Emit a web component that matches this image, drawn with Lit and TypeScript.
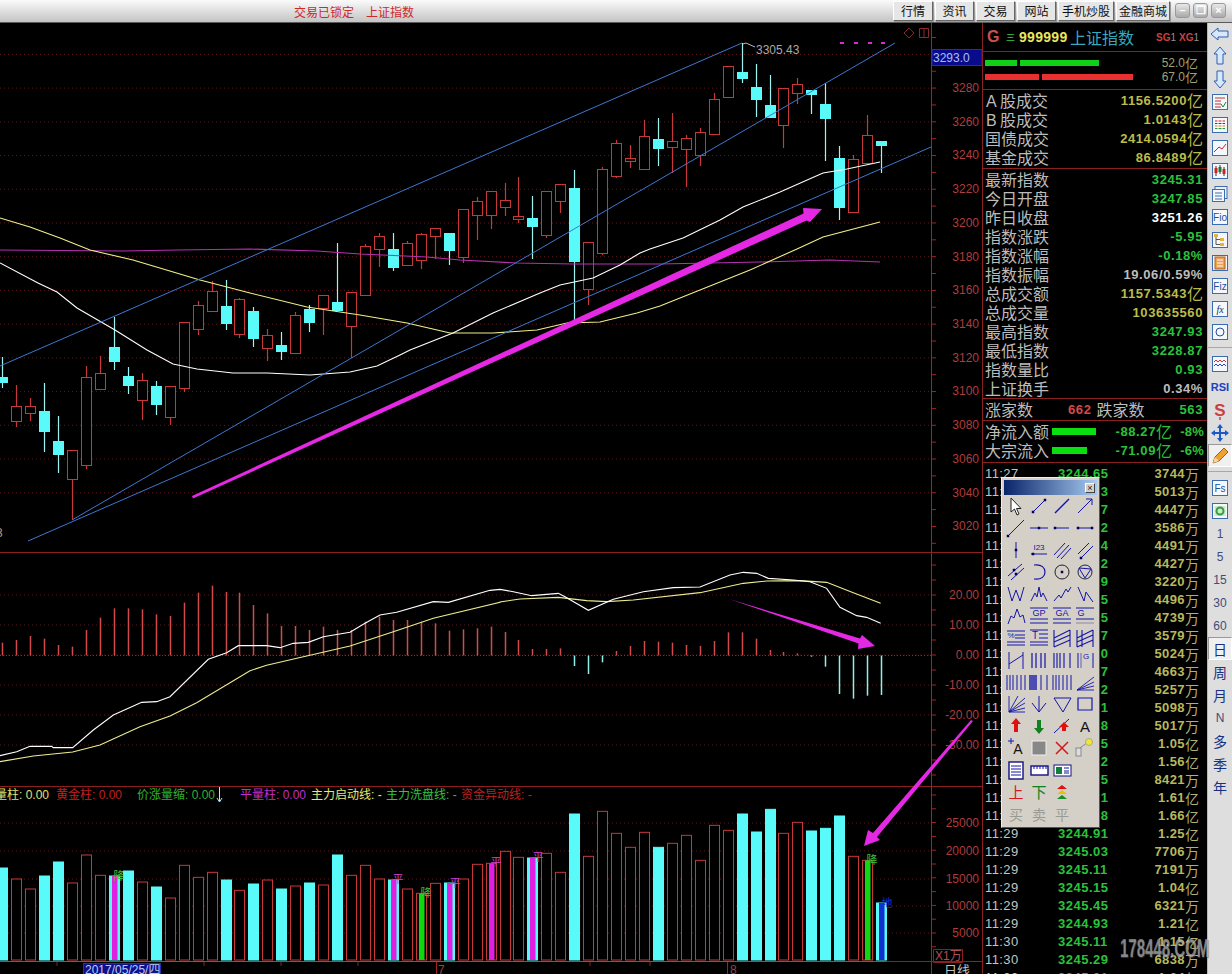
import { LitElement, html, css, svg } from "lit";
import { customElement } from "lit/decorators.js";

const X = (i: number) => Math.round(2.3 + 13.95 * i);
type C = [number, number, number, number, string];
const candles: C[] = [
  [357,377,382,388,"c"],[385,406,421,427,"r"],[398,406,413,421,"r"],[383,411,431,452,"c"],[416,441,454,473,"c"],
  [450,450,479,520,"r"],[366,377,465,469,"r"],[356,373,389,389,"r"],[317,347,361,370,"c"],[367,376,385,394,"c"],
  [373,380,400,420,"r"],[381,386,404,415,"c"],[386,386,417,425,"r"],[322,322,388,392,"r"],[301,305,329,335,"r"],
  [281,291,311,312,"r"],[280,306,323,330,"c"],[298,299,334,338,"r"],[307,311,338,347,"c"],[329,335,348,361,"r"],
  [332,345,351,360,"c"],[312,315,353,353,"r"],[305,309,322,332,"c"],[295,295,308,335,"r"],[243,302,310,310,"c"],
  [292,292,326,358,"r"],[244,246,295,295,"r"],[233,236,249,267,"r"],[233,249,267,271,"c"],[241,243,265,265,"r"],
  [233,234,260,269,"r"],[228,228,236,259,"r"],[233,233,250,265,"c"],[209,209,257,263,"r"],[197,201,215,240,"r"],
  [191,191,215,229,"r"],[183,200,207,216,"r"],[177,216,219,223,"r"],[196,218,226,259,"c"],[191,191,235,238,"r"],
  [184,184,201,213,"r"],[170,188,261,320,"c"],[242,242,289,305,"r"],[167,169,253,255,"r"],[140,143,176,178,"r"],
  [145,158,161,168,"r"],[120,136,169,170,"r"],[118,139,148,166,"c"],[113,141,147,173,"r"],[135,138,149,187,"r"],
  [128,132,155,166,"r"],[93,99,134,135,"r"],[66,66,97,98,"r"],[43,72,78,83,"c"],[64,87,99,117,"c"],
  [75,105,117,117,"c"],[88,88,125,148,"r"],[78,84,93,104,"r"],[90,90,94,114,"c"],[83,104,118,161,"c"],
  [146,158,207,220,"c"],[155,159,212,212,"r"],[115,135,163,163,"r"],[141,141,145,173,"c"],
];
const z = (pts: number[][], ox: number, oy: number) => pts.map(([a, b]) => `${ox + a / 3},${oy + b / 3}`).join(" ");
const whiteMA = "0,263 38,283 57,292 77,308 115,330 147,350 173,364 197,369 233,373 267,373 310,375 350,372 377,366 400,355 410,350 453,333 493,313 540,293 560,285 593,278 620,265 640,253 650,249 683,238 720,220 743,207 780,192 823,173 847,169 880,162";
const yellowMA = "0,218 30,227 60,238 90,250 133,260 200,280 250,293 307,307 360,315 407,323 450,333 493,333 537,330 567,323 600,322 637,313 660,306 700,290 750,270 797,249 823,237 880,222";
const purpleMA = "0,250 123,251 177,250 250,249 317,251 360,254 427,257 460,260 517,263 573,264 660,264 760,262 830,260 880,262";
const macdWhite = z([[0,617],[50,605],[90,589],[155,589],[160,593],[218,593],[280,540],[340,495],[425,457],[470,455],[510,440],[625,328],[680,308],[715,287],[800,287],[840,293],[880,280],[925,277],[970,260],[1050,247],[1095,220],[1140,195],[1190,187],[1300,155],[1345,157],[1470,121]],0,550)
  + " " + z([[0,118],[40,125],[95,137],[175,130],[195,140],[265,181],[340,148],[430,125],[520,113],[600,111],[690,75],[730,67],[770,70],[805,85],[880,90],[930,95],[980,115],[1020,172],[1070,197],[1100,202],[1142,220]],500,550);
const macdYellow = z([[0,635],[100,618],[218,606],[300,585],[420,530],[510,498],[590,458],[750,362],[800,346],[920,318],[1050,288],[1180,245],[1300,205],[1500,157]],0,550)
  + " " + z([[0,156],[60,147],[175,142],[260,152],[320,155],[400,150],[600,128],[730,100],[800,93],[900,92],[980,97],[1060,128],[1142,160]],500,550);
const macdBars = [278,270,258,266,285,290,240,203,175,175,178,193,198,158,128,107,126,128,165,190,228,228,240,230,240,240,215,200,210,210,215,220,242,238,235,230,246,270,297,297,295,348,372,337,303,288,273,275,278,285,288,273,247,247,266,300,306,310,320,350,432,446,437,435];
const macdCyan = new Set([41,42,43,58,59,60,61,62,63]);
const volTops = [264,297,327,288,246,309,225,286,288,273,306,321,354,256,292,277,300,331,312,300,327,318,309,315,225,286,256,297,300,327,340,310,309,297,253,250,214,232,234,220,277,102,229,94,160,202,157,202,190,166,241,136,151,102,156,88,160,127,153,145,108,229,241,369];
const volCyan = new Set([0,3,4,8,9,11,16,18,20,22,24,28,32,38,41,47,53,54,55,58,59,60,63]);
const volInner: Record<number,string> = {8:"#e020e0",28:"#e020e0",30:"#10d810",32:"#e020e0",35:"#e020e0",38:"#e020e0",62:"#10d810",63:"#1030d0"};
const volTags: [number,number,string,string][] = [[119,880,"降","#40c040"],[398,883,"平","#d040d0"],[426,897,"降","#40c040"],[455,887,"平","#d040d0"],[496,866,"平","#d040d0"],[538,861,"平","#d040d0"],[872,864,"降","#40c040"],[887,907,"地","#1030d0"]];
const priceLabels = [3280,3260,3240,3220,3200,3180,3160,3140,3120,3100,3080,3060,3040,3020];
const macdLabels = ["20.00","10.00","0.00","-10.00","-20.00","-30.00"];
const volLabels: [string,number][] = [["25000",823],["20000",851],["15000",879],["10000",906],["5000",933]];

const rng = (a: number, b: number, s: number) => { const o: number[] = []; for (let v = a; v <= b; v += s) o.push(v); return o; };

const S = "#1414a8";
const ln = (d: string, w = 1) => svg`<path d=${d} fill="none" stroke=${S} stroke-width=${w}/>`;
const dot = (x: number, y: number) => svg`<rect x=${x-1.25} y=${y-1.25} width="2.500" height="2.500" fill="#000060"/>`;
const t = (x: number, y: number, s: string, sz = 8, c = S) => svg`<text x=${x} y=${y} font-size=${sz} fill=${c} font-family="Liberation Sans" text-anchor="middle">${s}</text>`;
const tools: unknown[] = [
  svg`<path d="M6 3v14l3.500-3 2.500 6 2-1-2.500-5.500h4.500z" fill="#fff" stroke="#222"/>`,
  svg`${ln("M5 17L17 5")}${dot(5,17)}${dot(17,5)}`,
  svg`${ln("M4 18L18 4",1.4)}`,
  svg`${ln("M4 18L18 4M12 4h6v6")}`,
  svg`${ln("M3 19L19 3")}${dot(3,19)}`,
  svg`${ln("M2 11H20")}${dot(11,11)}`,
  svg`${ln("M4 11H18")}${dot(4,11)}`,
  svg`${ln("M4 11H18")}${dot(4,11)}${dot(18,11)}`,
  svg`${ln("M11 3V19")}${dot(11,11)}`,
  svg`${t(11,11,"I23",8)}${ln("M3 15H19")}${dot(5,15)}`,
  svg`${ln("M3 16L14 4M6 19L18 6M10 20L20 9",1)}`,
  svg`${ln("M4 15L15 4M7 19L19 7")}${dot(7,19)}`,
  svg`${ln("M3 15L17 3M6 19L19 7")}${dot(9,9)}${dot(11,13)}`,
  svg`${ln("M6 4C14 3 17 7 17 11S14 19 6 18",1.2)}`,
  svg`<circle cx="11" cy="11" r="7" fill="none" stroke="#222"/>${dot(11,11)}`,
  svg`<circle cx="11" cy="11" r="7" fill="none" stroke="#224"/>${ln("M5 7L17 8L11 17Z")}`,
  svg`${ln("M3 4L7 18L11 7L15 18L19 4")}`,
  svg`${ln("M3 18L7 10L9 14L11 4L13 14L15 10L19 18")}`,
  svg`${ln("M3 18L8 12L10 15L15 6L17 9L20 4")}`,
  svg`${ln("M4 4L10 18L12 9L19 19")}`,
  svg`${ln("M3 19L6 11L9 13L12 4L15 12L18 10L20 18")}`,
  svg`${t(11,11,"GP",9)}${ln("M2 3H20M2 14H20M2 18H20")}`,
  svg`${t(11,11,"GA",9)}${ln("M2 3H20M2 14H20M2 18H20")}`,
  svg`${t(7,11,"G",9)}${ln("M2 3H20M2 14H20")}<path d="M2 18H20" stroke="#8888a0"/>`,
  svg`${t(6,11,"%",8)}${ln("M2 4H20M10 8H20M10 11H20M2 15H20M2 18H20")}`,
  svg`${t(7,12,"T",10)}${ln("M2 3H20M11 7H20M11 11H20M2 15H20M2 18H20")}`,
  svg`${ln("M3 3V20M19 3V20M3 11L19 3M3 15L19 8M3 20L19 13",1.1)}`,
  svg`${ln("M3 3V20M19 3V20M8 3V20M3 11L19 3M3 15L19 8M3 20L19 13",1.1)}`,
  svg`${ln("M4 3V20M18 3V20M4 15L18 6")}`,
  svg`${ln("M4 4V19M8 4V19M13 4V19M17 4V19",1.2)}`,
  svg`${ln("M3 4V19M6 4V19M9 4V19M13 4V19M19 4V19",1.1)}`,
  svg`${ln("M4 4V19M19 4V19")}${t(12,10,"G",8)}${ln("M7 4V19",.6)}`,
  svg`${ln("M2 4V19M5 4V19M8 4V19M12 4V19M16 4V19M20 4V19")}`,
  svg`${ln("M2 4V19M4 4V19M6 4V19M8 4V19",1.4)}${ln("M13 4V19M19 4V19")}`,
  svg`${ln("M2 4V19M5 4V19M8 4V19M12 4V19M16 4V19M20 4V19")}`,
  svg`${ln("M3 19L20 6M3 19L20 11M3 19L20 15M3 19H20",.9)}`,
  svg`${ln("M4 3V19H20M4 19L20 5M4 19L20 10M4 19L20 15M4 19L13 3",.9)}`,
  svg`${ln("M11 3V19M4 10L11 19L18 10",1)}`,
  svg`${ln("M3 5H20L12 19Z")}`,
  svg`${ln("M4 5H18V17H4Z",1.2)}`,
  svg`<path d="M11 3l5 6h-3v8h-4v-8h-3z" fill="#e01010"/>`,
  svg`<path d="M11 19l5-6h-3v-8h-4v8h-3z" fill="#108020"/>`,
  svg`${ln("M3 18L18 4")}<path d="M13 7l5 5h-3v4h-4v-4h-3z" fill="#e01010"/>`,
  svg`${t(11,17,"A",15,"#111")}`,
  svg`${t(13,17,"A",14,"#111")}${ln("M3 4H9M6 1V7",1)}`,
  svg`<rect x="4" y="4" width="14" height="14" fill="#888" stroke="#eee"/>`,
  svg`<path d="M5 5L17 17M17 5L5 17" stroke="#d01818" stroke-width="1.500"/>`,
  svg`<rect x="2" y="11" width="5" height="8" fill="#ddd" stroke="#888"/><path d="M6 11L14 5" stroke="#888"/><circle cx="15" cy="5" r="3.500" fill="#f0e830" stroke="#aa8"/>`,
  svg`<rect x="4" y="3" width="14" height="17" fill="#fff" stroke="#101080" stroke-width="1.400"/>${ln("M6 7H16M6 10H16M6 13H16M6 16H16")}`,
  svg`<rect x="3" y="7" width="17" height="9" fill="#fff" stroke="#101080" stroke-width="1.400"/>${ln("M6 7V10M9 7V10M12 7V10M15 7V10M18 7V10")}`,
  svg`<rect x="3" y="6" width="17" height="11" fill="#fff" stroke="#101080"/><rect x="5" y="8" width="6" height="7" fill="#108040"/>${ln("M13 9H18M13 12H18M13 14H18")}`,
  svg``,
  svg`<text x="11" y="17" font-size="15" fill="#d81818" text-anchor="middle" font-family="Noto Sans CJK SC">上</text>`,
  svg`<text x="11" y="17" font-size="15" fill="#108020" text-anchor="middle" font-family="Noto Sans CJK SC">下</text>`,
  svg`<path d="M11 4l5 4h-10z" fill="#e01010"/><path d="M11 9l5 4h-10z" fill="#e8c000"/><path d="M11 14l5 4h-10z" fill="#109020"/>`,
  svg``,
  svg`<text x="11" y="17" font-size="14" fill="#9a9a92" text-anchor="middle" font-family="Noto Sans CJK SC">买</text>`,
  svg`<text x="11" y="17" font-size="14" fill="#9a9a92" text-anchor="middle" font-family="Noto Sans CJK SC">卖</text>`,
  svg`<text x="11" y="17" font-size="14" fill="#9a9a92" text-anchor="middle" font-family="Noto Sans CJK SC">平</text>`,
  svg``,
];

const box = (inner: unknown) => svg`<rect x="2.500" y="2.500" width="15" height="15" fill="#f4f8fc" stroke="#3c6cb0"/>${inner}`;
const B = "#2050a0";
const side: unknown[] = [
  svg`<path d="M1 10l7-6v3h10v6h-10v3z" fill="#d8e8fa" stroke="#2860b0"/>`,
  svg`<path d="M10 1l6 7h-3v10h-6v-10h-3z" fill="#d8e8fa" stroke="#2860b0"/>`,
  svg`<path d="M10 19l6-7h-3v-10h-6v10h-3z" fill="#d8e8fa" stroke="#2860b0"/>`,
  box(svg`<path d="M5 6H15M5 9H11M5 12H11M5 15H11" stroke="#c03030"/><path d="M11 12l2 3 3-5" stroke="#208040" fill="none"/>`),
  box(svg`<path d="M5 6H15" stroke="#d02020"/><path d="M5 8.500H15" stroke="#2040c0"/><path d="M5 11H15" stroke="#d08020"/><path d="M5 13.500H15" stroke="#20a040"/><path d="M8 5V16M12 5V16" stroke="#fff"/>`),
  box(svg`<path d="M4 14L9 9L12 11L16 6" stroke="#d02020" fill="none"/>`),
  box(svg`<path d="M6 5V15M10 4V13M14 6V15" stroke="#333"/><rect x="4.500" y="7" width="3" height="5" fill="#d02020"/><rect x="8.500" y="6" width="3" height="5" fill="#108030"/><rect x="12.500" y="8" width="3" height="5" fill="#d02020"/>`),
  svg`<rect x="5" y="2.500" width="12" height="12" fill="#eef" stroke="#3c6cb0"/><rect x="2.500" y="5.500" width="12" height="12" fill="#f4f8fc" stroke="#3c6cb0"/><path d="M5 9H12M5 12H12M5 15H12" stroke="#3c6cb0"/>`,
  box(svg`<text x="10" y="14" font-size="10" font-family="Liberation Sans" fill=${B} text-anchor="middle">Fio</text>`),
  box(svg`<rect x="4" y="4" width="4" height="3" fill="#e8b040"/><rect x="10" y="8" width="4" height="3" fill="#e8b040"/><rect x="10" y="13" width="4" height="3" fill="#e8b040"/><path d="M6 7V14.500H10M6 9.500H10" stroke="#555" fill="none"/>`),
  box(svg`<rect x="5" y="4" width="10" height="12" fill="#f0a050" stroke="#b06020"/><path d="M7 7H13M7 10H13M7 13H13" stroke="#fff"/>`),
  box(svg`<text x="10" y="14" font-size="10" font-family="Liberation Sans" fill=${B} text-anchor="middle">Fiz</text>`),
  box(svg`<text x="10" y="14" font-size="10" font-style="italic" font-family="Liberation Serif" fill="#103070" text-anchor="middle">fx</text>`),
  box(svg`<circle cx="10" cy="10" r="4" fill="none" stroke=${B}/>`),
  "sep",
  box(svg`<path d="M4 8l2-2 2 2 2-2 2 2 2-2 2 2" stroke="#d03030" fill="none"/><path d="M4 12l2-2 2 2 2-2 2 2 2-2 2 2" stroke="#3040c0" fill="none"/>`),
  svg`<text x="10" y="14" font-size="11" font-weight="bold" font-family="Liberation Sans" fill="#2040c0" text-anchor="middle">RSI</text>`,
  svg`<path d="M10 17V20" stroke="#c84040" stroke-width="1.500"/><text x="10" y="16" font-size="17" font-weight="bold" font-family="Liberation Sans" fill="#c84040" text-anchor="middle">S</text>`,
  svg`<path d="M10 1l3 4h-2v4h4v-2l4 3-4 3v-2h-4v4h2l-3 4-3-4h2v-4h-4v2l-4-3 4-3v2h4v-4h-2z" fill="#1c58c8"/>`,
  "pencil",
  "sep",
  box(svg`<text x="10" y="14" font-size="10" font-family="Liberation Sans" fill=${B} text-anchor="middle">Fs</text>`),
  box(svg`<rect x="4.500" y="5" width="11" height="10" fill="#cfe8c8"/><circle cx="10" cy="10" r="3.500" fill="none" stroke="#30a040" stroke-width="2"/>`),
  "1","5","15","30","60","日","周","月","N","多","季","年",
];

const vols = ["3744万","5013万","4447万","3586万","4491万","4427万","3220万","4496万","4739万","3579万","5024万","4663万","5257万","5098万","5017万","1.05亿","1.56亿","8421万","1.61亿","1.66亿","1.25亿","7706万","7191万","1.04亿","6321万","1.21亿","1.15亿","6838万","1.04亿"];
const prices = ["3244.65","3244.83","3244.87","3244.92","3244.94","3244.92","3244.89","3244.95","3244.95","3244.97","3245.00","3244.97","3244.92","3244.91","3244.98","3245.05","3245.12","3245.05","3245.01","3244.98","3244.91","3245.03","3245.11","3245.15","3245.45","3244.93","3245.11","3245.29","3245.31"];
const times = prices.map((_, i) => (i < 8 ? "11:27" : i < 20 ? "11:28" : i < 26 ? "11:29" : "11:30"));

const rowsA: [unknown, string][] = [
  [html`<i>A</i>股成交`, "1156.5200"], [html`<i>B</i>股成交`, "1.0143"], ["国债成交", "2414.0594"], ["基金成交", "86.8489"],
];
const rowsB: [string, string, string][] = [
  ["最新指数","3245.31","g"],["今日开盘","3247.85","g"],["昨日收盘","3251.26","w"],["指数涨跌","-5.95","g"],["指数涨幅","-0.18%","g"],
  ["指数振幅","19.06/0.59%","s"],["总成交额","1157.5343亿","y"],["总成交量","103635560","y"],["最高指数","3247.93","g"],["最低指数","3228.87","g"],["指数量比","0.93","g"],["上证换手","0.34%","s"],
];
const withUnit = (v: string) => { const m = v.match(/^(.*?)([万亿])$/); return m ? html`${m[1]}<span class="unit">${m[2]}</span>` : v; };

@customElement("app-root")
export class AppRoot extends LitElement {
  static styles = css`
    :host { display: block; width: 1232px; height: 974px; overflow: hidden; position: relative; background: #000; font-family: "Liberation Sans", "Noto Sans CJK SC", sans-serif; }
    .top { height: 23px; box-sizing: border-box; display: flex; align-items: flex-start; background: linear-gradient(#fbfbfb, #c4c4c4); border-bottom: 1px solid #5a5a5a; position: relative; }
    .title { margin-left: 294px; color: #d02828; font: 12px/23px "Noto Sans CJK SC", sans-serif; display: flex; gap: 12px; white-space: nowrap; }
    .btns { margin-left: auto; display: flex; align-items: center; height: 21px; padding-right: 6px; }
    .btn { height: 20px; box-sizing: border-box; border: 1px solid; border-color: #fff #666 #666 #fff; background: #e6e6e6; color: #111; font: 12px/18px "Noto Sans CJK SC", sans-serif; text-align: center; margin-right: 2px; box-shadow: 1px 1px 0 #999; }
    .win { width: 15px; height: 15px; margin-left: 3px; border-radius: 3px; border: 1px solid #999; background: linear-gradient(#e8e8e8, #aaa); color: #fff; font: bold 11px/13px "Liberation Sans"; text-align: center; box-sizing: border-box; }
    .main { display: flex; height: 951px; }
    .chart { width: 982px; flex: none; display: block; }
    .chart text { font-family: "Liberation Sans", "Noto Sans CJK SC", sans-serif; font-size: 12px; }
    .panel { width: 225px; flex: none; border-left: 1px solid #8a2020; box-sizing: border-box; position: relative; color: #bcbcbc; overflow: hidden; }
    .sec { border-bottom: 1px solid #8a2020; }
    .hd { height: 29px; box-sizing: border-box; display: flex; align-items: center; padding: 0 8px 0 4px; white-space: nowrap; }
    .hd .g { color: #c85050; font: bold 16px "Liberation Sans"; width: 19px; }
    .hd .eq { color: #38c848; font: 9px "Noto Sans CJK SC"; width: 13px; }
    .hd .code { color: #e8e860; font: bold 14px "Liberation Sans"; letter-spacing: .3px; width: 51px; }
    .hd .name { color: #38a8c0; font: 16px "Noto Sans CJK SC"; flex: 1; }
    .hd .sg { color: #c84040; font: bold 10px "Liberation Sans"; }
    .hd .sg b { color: #909090; font-weight: normal; margin-right: 3px; }
    .hd .sg b:last-child { margin-right: 0; }
    .bars { height: 38px; box-sizing: border-box; padding: 4px 9px 0 2px; }
    .barrow { display: flex; align-items: center; height: 14px; gap: 3px; }
    .barrow b { height: 6px; display: block; }
    .barrow span { margin-left: auto; color: #a0a070; font-size: 12px; display: flex; align-items: center; }
    .barrow span em { font: 13px/14px "Noto Sans CJK SC"; }
    .rows { padding: 1px 4px 1px 2px; }
    .rows.b { padding-bottom: 0; }
    .row { display: flex; justify-content: space-between; height: 19px; align-items: center; font: 16px/19px "Noto Sans CJK SC", sans-serif; }
    .row i { font-style: normal; display: inline-block; width: 15px; text-align: left; font-family: "Liberation Sans"; padding-left: 1px; box-sizing: border-box; }
    .val { font: bold 13px/19px "Liberation Sans"; letter-spacing: .6px; white-space: nowrap; display: flex; align-items: center; justify-content: flex-end; height: 19px; }
    .unit { font: 400 16px/19px "Noto Sans CJK SC"; letter-spacing: 0; }
    .y { color: #bcbc48; } .g { color: #2cc03c; } .w { color: #fff; } .s { color: #bcbcbc; } .r { color: #d84848; }
    .zd { display: grid; grid-template-columns: 1fr 1fr; gap: 5px; padding: 0 4px 0 2px; height: 21px; align-items: center; }
    .zd > div { display: flex; justify-content: space-between; align-items: center; font: 16px/21px "Noto Sans CJK SC", sans-serif; }
    .flow { padding: 1px 3px 2px 2px; }
    .flowrow { display: flex; align-items: center; height: 19px; font: 16px/19px "Noto Sans CJK SC", sans-serif; white-space: nowrap; }
    .flowrow b.bar { background: #0ae010; height: 7px; display: block; }
    .flowrow .bc { width: 64px; margin-left: 3px; flex: none; }
    .flowrow .fv { width: 56px; flex: none; }
    .flowrow .pc { flex: 1; letter-spacing: .2px; }
    .tb { padding: 2px 8px 0 2px; }
    .tr { height: 18px; display: grid; grid-template-columns: 73px 1fr auto; align-items: center; font: 13px/18px "Liberation Sans"; white-space: nowrap; }
    .tr .tm { color: #c4c4c4; letter-spacing: .4px; }
    .tr .pr { font-weight: bold; color: #2cc03c; letter-spacing: .5px; }
    .tr .vo { font-weight: bold; color: #b8b85c; letter-spacing: .4px; display: flex; align-items: center; height: 18px; justify-content: flex-end; }
    .tr .unit { color: #b0b070; font: 400 14px/18px "Noto Sans CJK SC"; }
    .box { position: absolute; left: 18px; top: 454px; width: 99px; height: 351px; box-sizing: border-box; background: #d4d0c8; border: 1px solid; border-color: #eee #555 #555 #eee; padding: 2px; }
    .ttl { height: 15px; background: linear-gradient(90deg, #0a246a, #a6caf0); display: flex; justify-content: flex-end; align-items: center; padding-right: 2px; }
    .cl { width: 10px; height: 10px; box-sizing: border-box; border: 1px solid; border-color: #fff #444 #444 #fff; background: #d4d0c8; color: #222; font: 9px/8px "Liberation Sans"; text-align: center; }
    .grid { display: grid; grid-template-columns: repeat(4, 23px); grid-auto-rows: 22px; margin-left: 0; }
    .grid svg { width: 22px; height: 22px; display: block; margin: auto; overflow: visible; }
    .tools { flex: 1; background: #dedede; border-left: 1px solid #b8b8b8; display: flex; flex-direction: column; align-items: center; }
    .tools .it { height: 23px; width: 24px; flex: none; display: flex; align-items: center; justify-content: center; color: #404c78; font: 12px "Liberation Sans", "Noto Sans CJK SC"; box-sizing: border-box; }
    .tools .it:first-child { height: 21px; }
    .tools .it.cj { font: 14px "Noto Sans CJK SC"; color: #183080; }
    .tools .it.sel { background: #f0f0f0; border: 1px solid; border-color: #999 #fff #fff #999; }
    .tools .it svg { width: 20px; height: 20px; display: block; }
    .tools .sep { height: 9px; width: 100%; flex: none; display: flex; align-items: center; }
    .tools .sep::after { content: ""; display: block; width: 100%; border-top: 1px solid #a8a8a8; }
    .wm { position: absolute; left: 1120px; top: 933px; font: bold 25px/30px "Liberation Sans"; color: rgba(196,196,196,.62); transform: scaleX(.6); transform-origin: 0 0; white-space: nowrap; text-shadow: 1px 1px 1px rgba(90,90,90,.6); pointer-events: none; }
  `;

  private chart() {
    const bw = 10;
    const grid = "#601818", red = "#c83838";
    return svg`
      <rect x="0" y="23" width="982" height="951" fill="#000"/>
      ${rng(54.4, 526, 33.72).map((y) => svg`<line x1="0" x2="931" y1=${y} y2=${y} stroke=${grid} stroke-dasharray="1 3"/>`)}
      ${rng(595, 746, 30).map((y) => svg`<line x1="0" x2="931" y1=${y} y2=${y} stroke=${grid} stroke-dasharray="1 3"/>`)}
      ${volLabels.map(([, y]) => svg`<line x1="0" x2="931" y1=${y} y2=${y} stroke=${grid} stroke-dasharray="1 3"/>`)}
      ${candles.map((c, i) => {
        const x = X(i) + 0.5, col = c[4] === "c" ? "#58fafa" : red;
        return svg`<line x1=${x} x2=${x} y1=${c[0]} y2=${c[3]} stroke=${c[4] === "c" ? "#9ef4f0" : red} stroke-width="1.200"/>
          <rect x=${x - bw / 2} y=${c[1] + 0.5} width=${bw} height=${c[2] - c[1]} fill=${c[4] === "c" ? col : "#000"} stroke=${col}/>`;
      })}
      <polyline points=${purpleMA} fill="none" stroke="#b830b0" stroke-width="1.100"/>
      <polyline points=${yellowMA} fill="none" stroke="#f0f088" stroke-width="1.100"/>
      <polyline points=${whiteMA} fill="none" stroke="#fff" stroke-width="1.100"/>
      <line x1="0" y1="366" x2="742" y2="43" stroke="#3c78d0"/>
      <line x1="72" y1="520" x2="895" y2="43" stroke="#3c78d0"/>
      <line x1="28" y1="541" x2="931" y2="147" stroke="#3c78d0"/>
      <polygon points="192,496 803.500,213.500 803,208 822,209 810,222 806.500,220.500 193,498.500" fill="#e428e4"/>
      <polyline points="743,44 746,43 755,47" fill="none" stroke="#bbb"/>
      <text x="756" y="54" fill="#a8a8a8">3305.43</text>
      ${[840, 854, 868, 881].map((x) => svg`<rect x=${x} y="42" width="4" height="2" fill="#d030d0"/>`)}
      <path d="M909 28l5 5-5 5-5-5zM919.500 28.500h9v9h-9zM924 28v10" fill="none" stroke="#8a2a2a"/>
      <text x="-4" y="537" fill="#a0a0a0">3</text>

      <line x1="0" x2="982" y1="552.500" y2="552.500" stroke="#8c2020" stroke-width="1.200"/>
      <line x1="0" x2="982" y1="786.500" y2="786.500" stroke="#8c2020" stroke-width="1.200"/>
      <line x1="931.500" x2="931.500" y1="23" y2="974" stroke="#a82020"/>
      ${rng(37.5, 552, 16.86).map((y) => svg`<line x1="931" x2="936" y1=${y} y2=${y} stroke="#a82020"/>`)}
      ${rng(565, 786, 15).map((y) => svg`<line x1="931" x2="936" y1=${y} y2=${y} stroke="#a82020"/>`)}
      ${rng(795, 960, 13.8).map((y) => svg`<line x1="931" x2="936" y1=${y} y2=${y} stroke="#a82020"/>`)}
      <rect x="932" y="49.500" width="50" height="16" fill="#0a0a8c" stroke="#2a2ab0"/>
      <text x="933" y="62" fill="#a8c0f0">3293.0</text>
      ${priceLabels.map((l, i) => svg`<text x="979" y=${92 + i * 33.72} fill="#b03c3c" text-anchor="end">${l}</text>`)}
      ${macdLabels.map((l, i) => svg`<text x="979" y=${599 + i * 30} fill="#b03c3c" text-anchor="end">${l}</text>`)}
      ${volLabels.map(([l, y]) => svg`<text x="979" y=${y + 4} fill="#b03c3c" text-anchor="end">${l}</text>`)}

      <line x1="0" x2="931" y1="655.500" y2="655.500" stroke="#8c2c2c" stroke-dasharray="1 2"/>
      ${macdBars.map((v, i) => {
        const y = 550 + v / 3;
        return svg`<line x1=${X(i) + 0.5} x2=${X(i) + 0.5} y1="655.500" y2=${y} stroke=${macdCyan.has(i) ? "#90f0e8" : "#d04c4c"} stroke-width="1.500"/>`;
      })}
      <polyline points=${macdYellow} fill="none" stroke="#ecec90" stroke-width="1.100"/>
      <polyline points=${macdWhite} fill="none" stroke="#fff" stroke-width="1.100"/>
      <polygon points="729,599 860,638.500 862,635 875,646 858,649 858.500,643.500" fill="#e428e4"/>

      <text y="799" x="-5" fill="#e0e070">量柱: 0.00</text>
      <text y="799" x="56" fill="#c02020">黄金柱: 0.00</text>
      <text y="799" x="137" fill="#30b030">价涨量缩: 0.00</text>
      <path d="M219.500 787V801M217 798l2.500 4 2.500-4" stroke="#a8f0f8" fill="none"/>
      <text y="799" x="240" fill="#c030c8">平量柱: 0.00</text>
      <text y="799" x="311" fill="#e8e870">主力启动线: -</text>
      <text y="799" x="386" fill="#38c040">主力洗盘线: -</text>
      <text y="799" x="461" fill="#c02020">资金异动线: -</text>

      ${volTops.map((v, i) => {
        const y = 780 + v / 3, x = X(i) + 0.5, cy = volCyan.has(i), inner = volInner[i];
        return svg`<rect x=${x - bw / 2} y=${y} width=${bw} height=${960 - y} fill=${cy ? "#58fafa" : "#000"} stroke=${cy ? "#58fafa" : red}/>
          ${inner ? svg`<rect x=${x - 2.5} y=${y} width="5.500" height=${960 - y} fill=${inner}/>` : ""}`;
      })}
      ${volTags.map(([x, y, s, c]) => svg`<text x=${x} y=${y} fill=${c} style="font-size:11px" text-anchor="middle">${s}</text>`)}
      <line x1="0" x2="886" y1="961.500" y2="961.500" stroke="#b83080" stroke-width="1.200"/>
      <line x1="886" x2="982" y1="961.500" y2="961.500" stroke="#8c2020" stroke-width="1.200"/>
      <path d="M933.500 949.500h29v13h-29z" fill="none" stroke="#8c2020"/>
      <text x="935" y="960" fill="#b05050">X1万</text>
      <polygon points="864,846 868,830 873,833 971,720 973,721 877,837 880,840" fill="#e428e4"/>
      ${[57, 204, 281, 358, 590, 650].map((x) => svg`<line x1=${x} x2=${x} y1="962" y2="966" stroke="#8c2020"/>`)}
      <path d="M436.500 962v12M727.500 962v12" stroke="#a02020"/>
      <text x="438" y="974" fill="#a04040">7</text>
      <text x="730" y="974" fill="#a04040">8</text>
      <rect x="83.500" y="963.500" width="77" height="12" fill="#10108c" stroke="#2a2ab0"/>
      <text x="85" y="974" fill="#b8ccf4">2017/05/25/四</text>
      <text x="944" y="975" fill="#c0c0c0" style="font-size:13px">日线</text>
    `;
  }

  render() {
    const btns: [string, number][] = [["行情",40],["资讯",39],["交易",39],["网站",39],["手机炒股",56],["金融商城",54]];
    return html`
      <div class="top">
        <div class="title"><span>交易已锁定</span><span>上证指数</span></div>
        <div class="btns">
          ${btns.map(([b, w]) => html`<div class="btn" style="width:${w}px">${b}</div>`)}
          <div class="win">–</div><div class="win">❐</div><div class="win">×</div>
        </div>
      </div>
      <div class="main">
        <svg class="chart" viewBox="0 23 982 951" width="982" height="951">${this.chart()}</svg>
        <div class="panel">
          <div class="sec hd">
            <span class="g">G</span><span class="eq">三</span><span class="code">999999</span><span class="name">上证指数</span>
            <span class="sg">SG<b>1</b>XG<b>1</b></span>
          </div>
          <div class="sec bars">
            <div class="barrow"><b style="width:32px;background:#10d018"></b><b style="width:79px;background:#10d018"></b><span>52.0<em>亿</em></span></div>
            <div class="barrow"><b style="width:54px;background:#e83030"></b><b style="width:91px;background:#e83030"></b><span>67.0<em>亿</em></span></div>
          </div>
          <div class="sec rows">
            ${rowsA.map(([l, v]) => html`<div class="row"><span>${l}</span><span class="val y">${v}<span class="unit">亿</span></span></div>`)}
          </div>
          <div class="sec rows b">
            ${rowsB.map(([l, v, c]) => html`<div class="row"><span>${l}</span><span class="val ${c}">${withUnit(v)}</span></div>`)}
          </div>
          <div class="sec zd">
            <div><span>涨家数</span><span class="val r">662</span></div>
            <div><span>跌家数</span><span class="val g">563</span></div>
          </div>
          <div class="sec flow">
            <div class="flowrow"><span>净流入额</span><div class="bc"><b class="bar" style="width:44px"></b></div><span class="val g fv">-88.27<span class="unit">亿</span></span><span class="val g pc">-8%</span></div>
            <div class="flowrow"><span>大宗流入</span><div class="bc"><b class="bar" style="width:35px"></b></div><span class="val g fv">-71.09<span class="unit">亿</span></span><span class="val g pc">-6%</span></div>
          </div>
          <div class="tb">
            ${vols.map((v, i) => html`<div class="tr"><span class="tm">${times[i]}</span><span class="pr">${prices[i]}</span><span class="vo">${withUnit(v)}</span></div>`)}
          </div>
          <div class="box">
            <div class="ttl"><div class="cl">×</div></div>
            <div class="grid">${tools.map((g) => html`<svg viewBox="0 0 22 22">${g}</svg>`)}</div>
          </div>
        </div>
        <div class="tools">
          ${side.map((s) => {
            if (s === "sep") return html`<div class="sep"></div>`;
            if (s === "pencil") return html`<div class="it sel"><svg viewBox="0 0 20 20"><path d="M3 17l2-6L14 2l4 4-9 9z" fill="#f0a030" stroke="#a06010"/><path d="M3 17l2-6 4 4z" fill="#f0d8a0"/></svg></div>`;
            if (typeof s === "string") {
              const cj = /[^\dN]/.test(s);
              return html`<div class="it ${cj ? "cj" : ""} ${s === "日" ? "sel" : ""}">${s}</div>`;
            }
            return html`<div class="it"><svg viewBox="0 0 20 20">${s}</svg></div>`;
          })}
        </div>
      </div>
      <div class="wm">178448.COM</div>
    `;
  }
}
